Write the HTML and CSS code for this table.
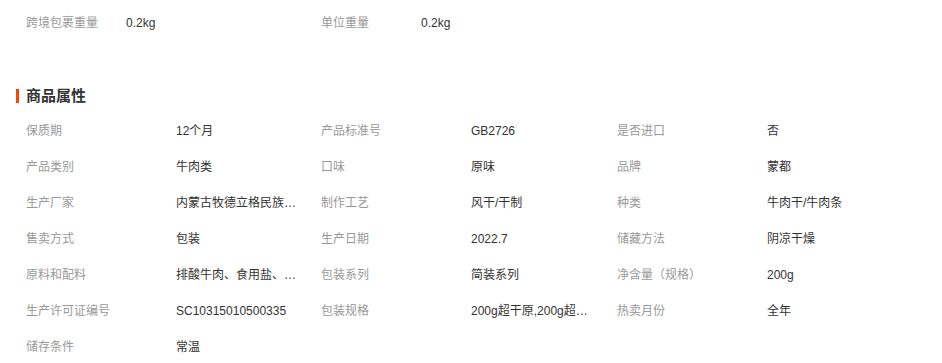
FILE: index.html
```html
<!DOCTYPE html>
<html lang="zh-CN">
<head>
<meta charset="utf-8">
<link rel="stylesheet" href="styles.css">
</head>
<body>
<div class="weights">
  <div class="w-item"><span class="w-label">跨境包裹重量</span><span class="w-value">0.2kg</span></div>
  <div class="w-item"><span class="w-label">单位重量</span><span class="w-value">0.2kg</span></div>
</div>
<h2 class="section-title">商品属性</h2>
<div class="props">
  <div class="lbl">保质期</div><div class="val">12个月</div>
  <div class="lbl">产品标准号</div><div class="val">GB2726</div>
  <div class="lbl">是否进口</div><div class="val">否</div>

  <div class="lbl">产品类别</div><div class="val">牛肉类</div>
  <div class="lbl">口味</div><div class="val">原味</div>
  <div class="lbl">品牌</div><div class="val">蒙都</div>

  <div class="lbl">生产厂家</div><div class="val">内蒙古牧德立格民族食品有限公司</div>
  <div class="lbl">制作工艺</div><div class="val">风干/干制</div>
  <div class="lbl">种类</div><div class="val">牛肉干/牛肉条</div>

  <div class="lbl">售卖方式</div><div class="val">包装</div>
  <div class="lbl">生产日期</div><div class="val">2022.7</div>
  <div class="lbl">储藏方法</div><div class="val">阴凉干燥</div>

  <div class="lbl">原料和配料</div><div class="val">排酸牛肉、食用盐、白砂糖</div>
  <div class="lbl">包装系列</div><div class="val">简装系列</div>
  <div class="lbl">净含量（规格）</div><div class="val">200g</div>

  <div class="lbl">生产许可证编号</div><div class="val">SC10315010500335</div>
  <div class="lbl">包装规格</div><div class="val">200g超干原,200g超干辣</div>
  <div class="lbl">热卖月份</div><div class="val">全年</div>

  <div class="lbl">储存条件</div><div class="val">常温</div>
</div>
</body>
</html>
```

FILE: styles.css
```css
html, body {
  margin: 0;
  padding: 0;
  background: #fff;
}
body {
  font-family: "Liberation Sans", "Noto Sans CJK SC", sans-serif;
  font-size: 12px;
  color: #333;
  width: 942px;
  height: 363px;
  overflow: hidden;
}
.weights {
  display: flex;
  padding: 5px 0 0 26px;
}
.w-item {
  display: flex;
  width: 295px;
  height: 36px;
  line-height: 36px;
}
.w-label {
  width: 100px;
  color: #999;
}
.w-value {
  color: #333;
}
.section-title {
  margin: 48px 0 0 16px;
  padding-left: 7px;
  border-left: 3px solid #ff4400;
  height: 14px;
  line-height: 14px;
  font-size: 15px;
  font-weight: bold;
  color: #333;
}
.props {
  margin-top: 10px;
  padding-left: 26px;
  display: grid;
  grid-template-columns: 150px 145px 150px 146px 150px 1fr;
  grid-auto-rows: 36px;
  line-height: 36px;
}
.lbl {
  color: #999;
  white-space: nowrap;
}
.val {
  color: #333;
  max-width: 122px;
  white-space: nowrap;
  overflow: hidden;
  text-overflow: ellipsis;
}
```
